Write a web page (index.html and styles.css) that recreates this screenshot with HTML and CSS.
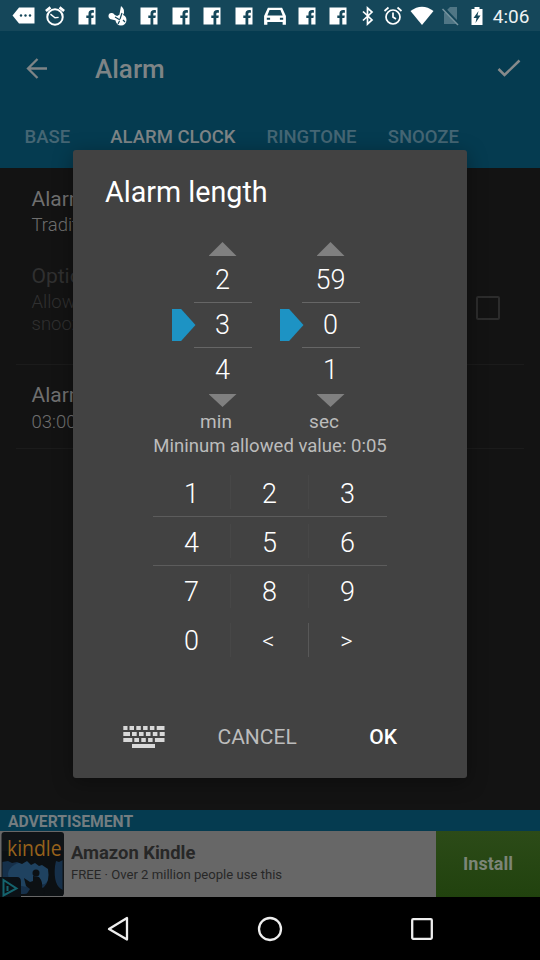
FILE: index.html
```html
<!DOCTYPE html>
<html lang="en">
<head>
<meta charset="utf-8">
<title>Alarm</title>
<link rel="stylesheet" href="styles.css">
</head>
<body>
<svg class="defs" aria-hidden="true">
  <symbol id="fb" viewBox="0 0 18 18"><path fill="#fff" d="M0.500 0.500h17v17h-4.200v-6.400h2.100l.4-2.600h-2.500V7c0-.9.4-1.300 1.300-1.300h1.300V3.200c-3.700-.5-5.400.6-5.400 3.500v1.800H8.300v2.600h2.200v6.400h-10z"/></symbol>
</svg>
<div class="screen">
  <header class="status">
    <div class="notes">
      <svg class="wide" viewBox="0 0 24 18"><path fill="#fff" d="M7 .5h15.500v16H7L.5 8.500z"/><g fill="#15475a"><circle cx="9" cy="8.500" r="1.200"/><circle cx="13.500" cy="8.500" r="1.200"/><circle cx="18" cy="8.500" r="1.200"/></g></svg>
      <svg viewBox="0 0 22 22"><g fill="none" stroke="#fff" stroke-width="2.200"><circle cx="11" cy="12" r="8.500"/><path d="M6 9l5 4 4-.5" stroke-width="1.600"/><path d="M1 5.500l5-4M21 5.500l-5-4" stroke-width="3"/></g></svg>
      <svg class="f"><use href="#fb"/></svg>
      <svg viewBox="0 0 20 20"><g fill="#fff"><circle cx="3.500" cy="10" r="3"/><path d="M3 7l8 4 2-11q5 4 2 9l-1 4-4 2-8-2z"/><circle cx="13" cy="14" r="5.500"/></g><path d="M7 11l5 3M14 7l-2 6M10 18l1.500-3M15 14l2 2" stroke="#15475a" stroke-width="1.200"/></svg>
      <svg class="f"><use href="#fb"/></svg>
      <svg class="f"><use href="#fb"/></svg>
      <svg class="f"><use href="#fb"/></svg>
      <svg class="f"><use href="#fb"/></svg>
      <svg class="wide" viewBox="0 0 22 18"><path fill="#fff" fill-rule="evenodd" d="M4.500 1.500h13l3.500 7.500v8h-3v-2.500H4V17H1V9zM6 3.500L4 8.500h14l-2-5zM3.500 10.500v2h3v-2zm12 0v2h3v-2z"/></svg>
      <svg class="f"><use href="#fb"/></svg>
      <svg class="f"><use href="#fb"/></svg>
    </div>
    <div class="system">
      <svg width="14" height="20" viewBox="0 0 14 20"><path d="M2 5.500l9 8.500-4.500 4V2L11 6 2 14.500" fill="none" stroke="#fff" stroke-width="1.700"/></svg>
      <svg width="20" height="20" viewBox="0 0 20 20"><g fill="none" stroke="#fff" stroke-width="1.700"><circle cx="10" cy="11" r="7"/><path d="M10 6.500V11l3 2M1.500 5l4-3.500M18.500 5l-4-3.500"/></g></svg>
      <svg width="24" height="20" viewBox="0 0 24 20"><path fill="#fff" d="M.5 5Q12-3.500 23.500 5L12 19z"/></svg>
      <svg width="18" height="20" viewBox="0 0 18 20"><path fill="#507685" d="M8 1h7v17H2V7z"/><path d="M1 1.500l16 17" stroke="#15475a" stroke-width="3"/><path d="M.5 3l15.500 16" stroke="#7895a0" stroke-width="1.500"/></svg>
      <svg width="14" height="20" viewBox="0 0 14 20"><path fill="#fff" d="M4.500 1h5v2h3v16h-11V3h3z"/><path fill="#15475a" d="M8.500 5L3.500 12H6.500l-1 5 5-7.500H7.500z"/></svg>
      <span class="clock">4:06</span>
    </div>
  </header>

  <div class="appbar">
    <svg width="24" height="24" viewBox="0 0 24 24"><path d="M23 11.500H4M13.500 2L4 11.500l9.500 9.500" fill="none" stroke="#7e8486" stroke-width="2.300"/></svg>
    <h1>Alarm</h1>
    <svg width="26" height="24" viewBox="0 0 26 24"><path d="M2.500 12l6 6L23.500 3.500" fill="none" stroke="#868a8b" stroke-width="2.500"/></svg>
  </div>
  <nav class="tabs">
    <span>BASE</span><span class="on">ALARM CLOCK</span><span>RINGTONE</span><span>SNOOZE</span>
  </nav>

  <main class="list">
    <section class="row first">
      <div class="name">Alarm</div>
      <div class="sub">Traditional</div>
    </section>
    <section class="row off">
      <div>
        <div class="name">Options</div>
        <div class="sub">Allow<br>snooze</div>
      </div>
      <i class="check"></i>
    </section>
    <section class="row last">
      <div class="name">Alarm</div>
      <div class="sub">03:00</div>
    </section>
  </main>

  <section class="ad">
    <div class="adbar">ADVERTISEMENT</div>
    <div class="adbody">
      <div class="cover">
        <svg width="65" height="66" viewBox="0 0 65 66">
          <rect x="1.500" y="1" width="62.500" height="64" rx="3" fill="#101417"/>
          <path fill="#16304a" d="M2.500 25h60v39h-60z"/>
          <ellipse cx="30" cy="43" rx="22" ry="13" fill="#1f4260"/>
          <g fill="#0c1013">
            <path d="M2 20h61v9l-4 2-3-1-1 5q-1 10 1 16 2 6 7 8v6H2v-2h22q14-1 20-7 6-6 4-18l-6-4-3 1-4-3-4 2-4-4-5 3-5-2-5 1-4-2-6 1z"/>
            <circle cx="36" cy="42" r="3.500"/>
            <path d="M33 45l6 1q4 5 3 10l3 5-2 3H26l4-6-4-3-2-8 6 4 3-1z"/>
          </g>
          <path fill="#0b1116" d="M0 46h17q4 0 4 5v15H0z"/>
          <path d="M3.500 49l13 8.500-13 7zM7.500 55v5" fill="none" stroke="#15636d" stroke-width="2"/>
        </svg>
        <span class="brand">kindle</span>
      </div>
      <div class="adtext"><strong>Amazon Kindle</strong><span>FREE · Over 2 million people use this</span></div>
      <div class="install">Install</div>
    </div>
  </section>

  <footer class="nav">
    <svg width="24" height="28" viewBox="0 0 24 28"><path d="M21 3v21.500L3 14z" fill="none" stroke="#eee" stroke-width="2.300" stroke-linejoin="round"/></svg>
    <svg width="28" height="28" viewBox="0 0 28 28"><circle cx="14" cy="14" r="11" fill="none" stroke="#eee" stroke-width="2.300"/></svg>
    <svg width="24" height="28" viewBox="0 0 24 28"><rect x="2.200" y="4.200" width="19.600" height="19.600" rx="1" fill="none" stroke="#eee" stroke-width="2.300"/></svg>
  </footer>

  <div class="dialog">
    <h2>Alarm length</h2>
    <div class="pickers">
      <div class="picker">
        <i class="up"></i><span>2</span><span class="mid">3</span><span>4</span><i class="down"></i><em>min</em>
      </div>
      <div class="picker">
        <i class="up"></i><span>59</span><span class="mid">0</span><span>1</span><i class="down"></i><em>sec</em>
      </div>
    </div>
    <p>Mininum allowed value: 0:05</p>
    <div class="keypad">
      <b>1</b><b>2</b><b>3</b>
      <b>4</b><b>5</b><b>6</b>
      <b>7</b><b>8</b><b>9</b>
      <b>0</b><b class="sym line">&lt;</b><b class="sym">&gt;</b>
    </div>
    <div class="actions">
      <svg width="42" height="24" viewBox="0 0 42 24"><g fill="none" stroke="#d8d8d8" stroke-width="4">
        <path d="M.3 3h4.200m2 0h4.500m2.300 0h4.500m2.300 0h4.500m2.300 0h4.500m2.300 0h7.800"/>
        <path d="M.3 9h6.700m2 0h4.700m2.300 0h4.600m2.300 0h4.600m2.300 0h4.600m2.300 0h5"/>
        <path d="M.3 15h9m2 0h4.700m2.300 0h4.500m2.300 0h4.500m2.300 0h9.600"/>
        <path d="M9 21h23"/></g></svg>
      <span class="cancel">CANCEL</span>
      <span class="ok">OK</span>
    </div>
  </div>
</div>
</body>
</html>
```
FILE: styles.css
```css
* { box-sizing: border-box; }
body { margin: 0; background: #000; font-family: Roboto, sans-serif; }
.defs { position: absolute; width: 0; height: 0; }
.screen { position: relative; width: 540px; height: 960px; display: flex; flex-direction: column; overflow: hidden; }
svg { display: block; flex: none; }

.status { height: 31px; background: #15475a; display: flex; align-items: center; padding-left: 8px; }
.notes { display: grid; grid-template-columns: repeat(11, 31.450px); place-items: center; }
.notes svg { width: 22px; height: 20px; }
.notes svg.wide { width: 24px; }
.notes svg.f { width: 18px; height: 18px; }
.system { display: flex; align-items: center; margin-left: 7px; }
.system svg:nth-child(2) { margin-left: 8px; }
.system svg:nth-child(3) { margin-left: 7px; }
.system svg:nth-child(4) { margin-left: 8px; }
.system svg:nth-child(5) { margin-left: 10px; }
.clock { color: #eef2f3; font-size: 19px; line-height: 28px; padding-top: 2px; margin-left: 9px; }

.appbar { height: 76px; background: #053b50; display: flex; align-items: center; padding: 0 18px 0 24px; color: #7e8486; }
.appbar h1 { flex: 1; margin: 0 0 0 47px; font-size: 26px; line-height: 30px; font-weight: 500; }
.tabs { height: 61px; background: #053b50; display: flex; padding-left: 24.500px; gap: 31.200px; color: #456674; font-size: 18.500px; line-height: 61px; font-weight: 500; white-space: nowrap; }
.tabs .on { color: #7e8486; margin-left: 9px; }

.list { height: 642px; background: #131313; padding: 0 16px; }
.row { color: #6f6f6f; padding: 0 15.500px; border-bottom: 1px solid #1b1b1b; }
.row.first { height: 80px; border: 0; padding-top: 17px; }
.row.off { height: 117px; padding: 14px 24.500px 0 15.500px; display: flex; justify-content: space-between; color: #303030; }
.row.last { height: 84px; padding-top: 16px; }
.name { font-size: 21px; line-height: 28px; }
.sub { font-size: 18.500px; line-height: 22px; font-weight: 300; padding-top: 1px; }
.last .sub { padding-top: 2px; }
.check { width: 24px; height: 24px; border: 2.500px solid #2c2c2c; border-radius: 2px; margin-top: 34px; }

.adbar { height: 21px; background: #053b50; color: #747d80; font-size: 15.700px; font-weight: 700; line-height: 24px; padding-left: 8px; }
.adbody { height: 66px; background: #676767; display: flex; }
.cover { position: relative; width: 65px; }
.brand { position: absolute; left: 7px; top: 0; font-family: "Open Sans", sans-serif; font-size: 22px; line-height: 32px; color: #97621b; transform: scaleX(.88); transform-origin: left; }
.adtext { flex: 1; padding: 11px 0 0 6px; color: #272727; display: flex; flex-direction: column; }
.adtext strong { font-size: 18.400px; line-height: 22px; }
.adtext span { font-size: 13.120px; line-height: 21px; }
.install { width: 104px; background: linear-gradient(#2c4b18, #21420e); color: #7c8577; font-size: 18px; font-weight: 700; line-height: 65px; text-align: center; }

.nav { height: 63px; background: #000; display: flex; align-items: center; justify-content: space-between; padding: 0 106px; }

.dialog { position: absolute; left: 73px; top: 150px; width: 394px; height: 628px; background: #424242; border-radius: 3px; box-shadow: 0 4px 20px rgba(0,0,0,.35); color: #fff; }
.dialog h2 { margin: 26px 0 0 32px; font-size: 28.700px; line-height: 32px; font-weight: 400; }
.pickers { display: flex; gap: 50px; padding: 34px 0 0 120.500px; }
.picker { width: 58px; display: flex; flex-direction: column; align-items: center; }
.picker span { font-size: 27px; line-height: 46px; height: 45px; font-weight: 300; width: 58px; text-align: center; }
.picker .mid { position: relative; border-top: 1px solid #666; border-bottom: 1px solid #666; height: 46px; line-height: 44px; }
.picker .mid + span { line-height: 44px; height: 45px; }
.mid::before { content: ""; position: absolute; left: -22px; top: 6px; width: 24px; height: 32px; background: #1d93c4; clip-path: polygon(0 0, 40% 0, 100% 50%, 40% 100%, 0 100%); }
.up, .down { width: 28px; height: 14px; background: #808080; }
.up { clip-path: polygon(50% 0, 100% 100%, 0 100%); margin-bottom: 1px; }
.down { clip-path: polygon(0 0, 100% 0, 50% 100%); height: 13px; margin-top: 1px; }
.picker em { font-style: normal; font-size: 19px; line-height: 24px; color: #bcbcbc; margin: 3px 13px 0 0; }
.dialog p { margin: 0; font-size: 18.550px; line-height: 25px; color: #bcbcbc; text-align: center; white-space: nowrap; }
.keypad { width: 234px; margin: 9px 0 0 79.500px; display: grid; grid-template-columns: repeat(3, 78px); grid-auto-rows: 49px; }
.keypad b { font-size: 27px; font-weight: 300; line-height: 52px; text-align: center; border-bottom: 1px solid #5c5c5c; background: linear-gradient(#474747, #474747) right center / 1px 34px no-repeat; }
.keypad b:nth-child(3n) { background: none; }
.keypad b:nth-child(n+7) { border: 0; }
.keypad .sym { font-size: 24px; padding-right: 2px; }
.keypad .line { background-image: linear-gradient(#585858, #585858); }
.actions { display: flex; align-items: center; margin: 57px 0 0 50px; height: 32px; font-size: 21px; line-height: 32px; }
.cancel { margin-left: 52.500px; color: #bcbcbc; }
.ok { margin-left: 72.500px; font-weight: 500; }
```
